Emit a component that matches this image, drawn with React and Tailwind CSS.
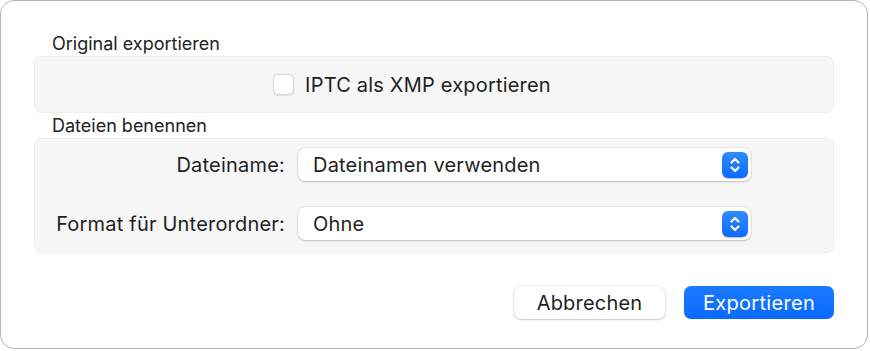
import { useState } from "react";

const Stepper = () => (
  <div className="w-[26px] h-[26px] rounded-[6px] bg-gradient-to-b from-[#2f8bff] to-[#0a6bff] flex items-center justify-center shadow-[0_0.5px_1px_rgba(0,0,0,0.25)]">
    <svg width="12" height="18" viewBox="0 0 12 18" fill="none" stroke="white" strokeWidth="2.2" strokeLinecap="round" strokeLinejoin="round">
      <path d="M2.5 6.5 L6 3 L9.5 6.5" />
      <path d="M2.5 11.5 L6 15 L9.5 11.5" />
    </svg>
  </div>
);

const PopUp = ({ value }) => (
  <div className="w-[453px] h-[33px] rounded-[7px] bg-white shadow-[0_0_0_0.5px_rgba(0,0,0,0.12),0_1px_2px_rgba(0,0,0,0.18)] flex items-center justify-between pl-[15px] pr-[3px]">
    <span className="text-[20px] tracking-[0.2px] text-[#1f1f1f]">{value}</span>
    <Stepper />
  </div>
);

export default function App() {
  const [iptc, setIptc] = useState(false);

  return (
    <div className="w-[870px] h-[351px] bg-white" style={{ fontFamily: "Inter, 'Liberation Sans', sans-serif" }}>
      <div className="w-[868px] h-[349px] rounded-[14px] border border-[#b4b4b4] bg-white flex flex-col px-[33px] pt-[33px]">
        <div className="pl-[18px] text-[18px] leading-[20px] text-[#222]">Original exportieren</div>
        <div className="mt-[2px] h-[57px] rounded-[7px] bg-[#f6f6f6] border border-[#ededed] flex items-center justify-center">
          <label className="flex items-center gap-[11px] mr-[44px] cursor-pointer">
            <button
              onClick={() => setIptc(!iptc)}
              className="w-[21px] h-[21px] rounded-[5px] bg-white border border-[#d6d6d6] shadow-[0_0.5px_1px_rgba(0,0,0,0.1)]"
            />
            <span className="text-[20px] tracking-[0.2px] text-[#1f1f1f]">IPTC als XMP exportieren</span>
          </label>
        </div>

        <div className="mt-[3px] pl-[18px] text-[18px] leading-[20px] text-[#222]">Dateien benennen</div>
        <div className="mt-[2px] h-[115px] rounded-[7px] bg-[#f6f6f6] border border-[#ededed] flex flex-col gap-[26px] pt-[9px]">
          <div className="flex items-center">
            <div className="w-[250px] text-right text-[20px] tracking-[0.2px] text-[#1f1f1f]">Dateiname:</div>
            <div className="ml-[13px]">
              <PopUp value="Dateinamen verwenden" />
            </div>
          </div>
          <div className="flex items-center">
            <div className="w-[250px] text-right text-[20px] tracking-[0.2px] text-[#1f1f1f]">Format für Unterordner:</div>
            <div className="ml-[13px]">
              <PopUp value="Ohne" />
            </div>
          </div>
        </div>

        <div className="mt-[33px] flex justify-end gap-[19px]">
          <button className="w-[151px] h-[33px] rounded-[7px] bg-white text-[20px] tracking-[0.2px] text-[#1f1f1f] shadow-[0_0_0_0.5px_rgba(0,0,0,0.12),0_1px_2px_rgba(0,0,0,0.18)]">
            Abbrechen
          </button>
          <button className="w-[150px] h-[33px] rounded-[7px] bg-gradient-to-b from-[#1a7aff] to-[#0a6aff] text-[20px] tracking-[0.3px] text-white">
            Exportieren
          </button>
        </div>
      </div>
    </div>
  );
}
